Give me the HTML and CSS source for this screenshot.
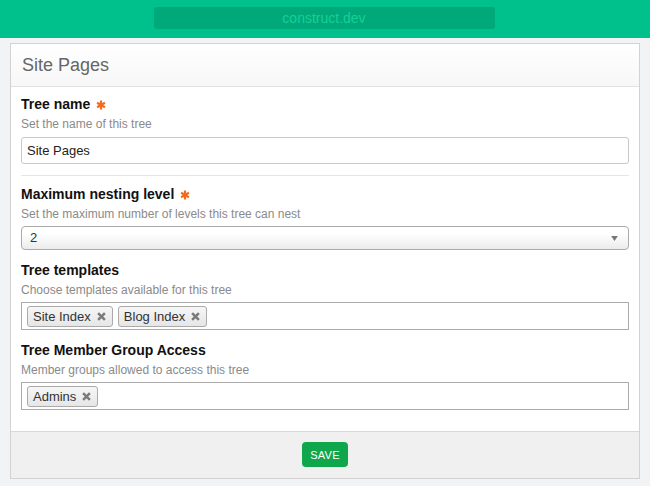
FILE: index.html
```html
<!DOCTYPE html>
<html>
<head>
<meta charset="utf-8">
<link rel="stylesheet" href="styles.css">
</head>
<body>
<div class="topbar">
  <div class="url">construct.dev</div>
</div>
<div class="card">
  <div class="card-header">Site Pages</div>
  <div class="card-body">
    <div class="field">
      <div class="label">Tree name <svg class="req" viewBox="0 0 10 10"><g stroke="#f26b1d" stroke-width="2.2" stroke-linecap="butt"><line x1="5" y1="0.5" x2="5" y2="9.5"/><line x1="1.1" y1="2.75" x2="8.9" y2="7.25"/><line x1="1.1" y1="7.25" x2="8.9" y2="2.75"/></g></svg></div>
      <div class="desc">Set the name of this tree</div>
      <div class="input">Site Pages</div>
    </div>
    <div class="sep"></div>
    <div class="field">
      <div class="label">Maximum nesting level <svg class="req" viewBox="0 0 10 10"><g stroke="#f26b1d" stroke-width="2.2"><line x1="5" y1="0.5" x2="5" y2="9.5"/><line x1="1.1" y1="2.75" x2="8.9" y2="7.25"/><line x1="1.1" y1="7.25" x2="8.9" y2="2.75"/></g></svg></div>
      <div class="desc">Set the maximum number of levels this tree can nest</div>
      <div class="select"><span>2</span><svg class="caret" viewBox="0 0 8 6"><path d="M0 0H8L4 6Z" fill="#777"/></svg></div>
    </div>
    <div class="field">
      <div class="label">Tree templates</div>
      <div class="desc">Choose templates available for this tree</div>
      <div class="multi">
        <span class="tag">Site Index <svg class="x" viewBox="0 0 8 8"><path d="M1 1L7 7M7 1L1 7" stroke="#7a7a7a" stroke-width="2.2"/></svg></span>
        <span class="tag">Blog Index <svg class="x" viewBox="0 0 8 8"><path d="M1 1L7 7M7 1L1 7" stroke="#7a7a7a" stroke-width="2.2"/></svg></span>
      </div>
    </div>
    <div class="field">
      <div class="label">Tree Member Group Access</div>
      <div class="desc">Member groups allowed to access this tree</div>
      <div class="multi">
        <span class="tag">Admins <svg class="x" viewBox="0 0 8 8"><path d="M1 1L7 7M7 1L1 7" stroke="#7a7a7a" stroke-width="2.2"/></svg></span>
      </div>
    </div>
  </div>
  <div class="card-footer">
    <button class="save">SAVE</button>
  </div>
</div>
</body>
</html>
```
FILE: styles.css
```css
* { box-sizing: border-box; }
html, body { margin: 0; padding: 0; }
body {
  background: #f2f3f5;
  font-family: "Liberation Sans", Arial, Helvetica, sans-serif;
  color: #222;
  width: 650px;
  height: 486px;
  overflow: hidden;
}
.topbar {
  height: 38px;
  background: #00c08b;
  display: flex;
  justify-content: center;
  padding-top: 7px;
}
.url {
  width: 341px;
  height: 22px;
  background: #00a97a;
  border-radius: 3px;
  color: #16cf98;
  font-size: 14px;
  font-weight: 300;
  line-height: 22px;
  text-align: center;
  margin-left: -2px;
}
.card {
  margin: 5px 10px 0 10px;
  border: 1px solid #d2d2d2;
  background: #fff;
}
.card-header {
  height: 43px;
  border-bottom: 1px solid #e2e2e2;
  background: linear-gradient(#ffffff, #f7f7f7);
  color: #666;
  font-size: 18px;
  line-height: 43px;
  padding-left: 11px;
}
.card-body {
  padding: 8px 10px 10px 10px;
}
.field { margin-bottom: 11px; }
.label {
  font-size: 14px;
  font-weight: bold;
  line-height: 18px;
  color: #111;
  display: flex;
  align-items: center;
}
.req {
  width: 10px;
  height: 10px;
  margin-left: 6px;
  margin-top: 2px;
}
.desc {
  font-size: 12px;
  color: #8a8a8a;
  line-height: 16px;
  margin-top: 3px;
}
.input {
  margin-top: 5px;
  height: 27px;
  border: 1px solid #c8c8c8;
  border-radius: 3px;
  font-size: 13px;
  line-height: 25px;
  padding-left: 5px;
  color: #222;
}
.sep {
  height: 1px;
  background: #e6e6e6;
  margin-bottom: 9px;
}
.select {
  margin-top: 4px;
  height: 24px;
  border: 1px solid #aaa;
  border-radius: 4px;
  background: linear-gradient(#ffffff 30%, #ececec);
  font-size: 13px;
  line-height: 22px;
  padding: 0 10px 0 8px;
  display: flex;
  justify-content: space-between;
  align-items: center;
  color: #333;
}
.caret { width: 7px; height: 5px; }
.multi {
  margin-top: 4px;
  height: 28px;
  border: 1px solid #aaa;
  padding: 3px 5px;
  display: flex;
  gap: 5px;
  align-items: flex-start;
}
.tag {
  height: 21px;
  border: 1px solid #aaa;
  border-radius: 3px;
  background: linear-gradient(#f6f6f6, #e6e6e6);
  font-size: 13px;
  line-height: 19px;
  padding: 0 6px 0 5px;
  color: #333;
  display: flex;
  align-items: center;
  gap: 6px;
}
.x { width: 9px; height: 9px; }
.card-footer {
  border-top: 1px solid #d8d8d8;
  background: #f0f0f0;
  padding: 10px 0 11px;
  display: flex;
  justify-content: center;
}
.save {
  height: 25px;
  width: 46px;
  padding: 0;
  border: none;
  border-radius: 4px;
  background: #10a74c;
  color: #fff;
  font-family: "Liberation Sans", Arial, sans-serif;
  font-size: 11px;
  letter-spacing: 0.3px;
}
```
